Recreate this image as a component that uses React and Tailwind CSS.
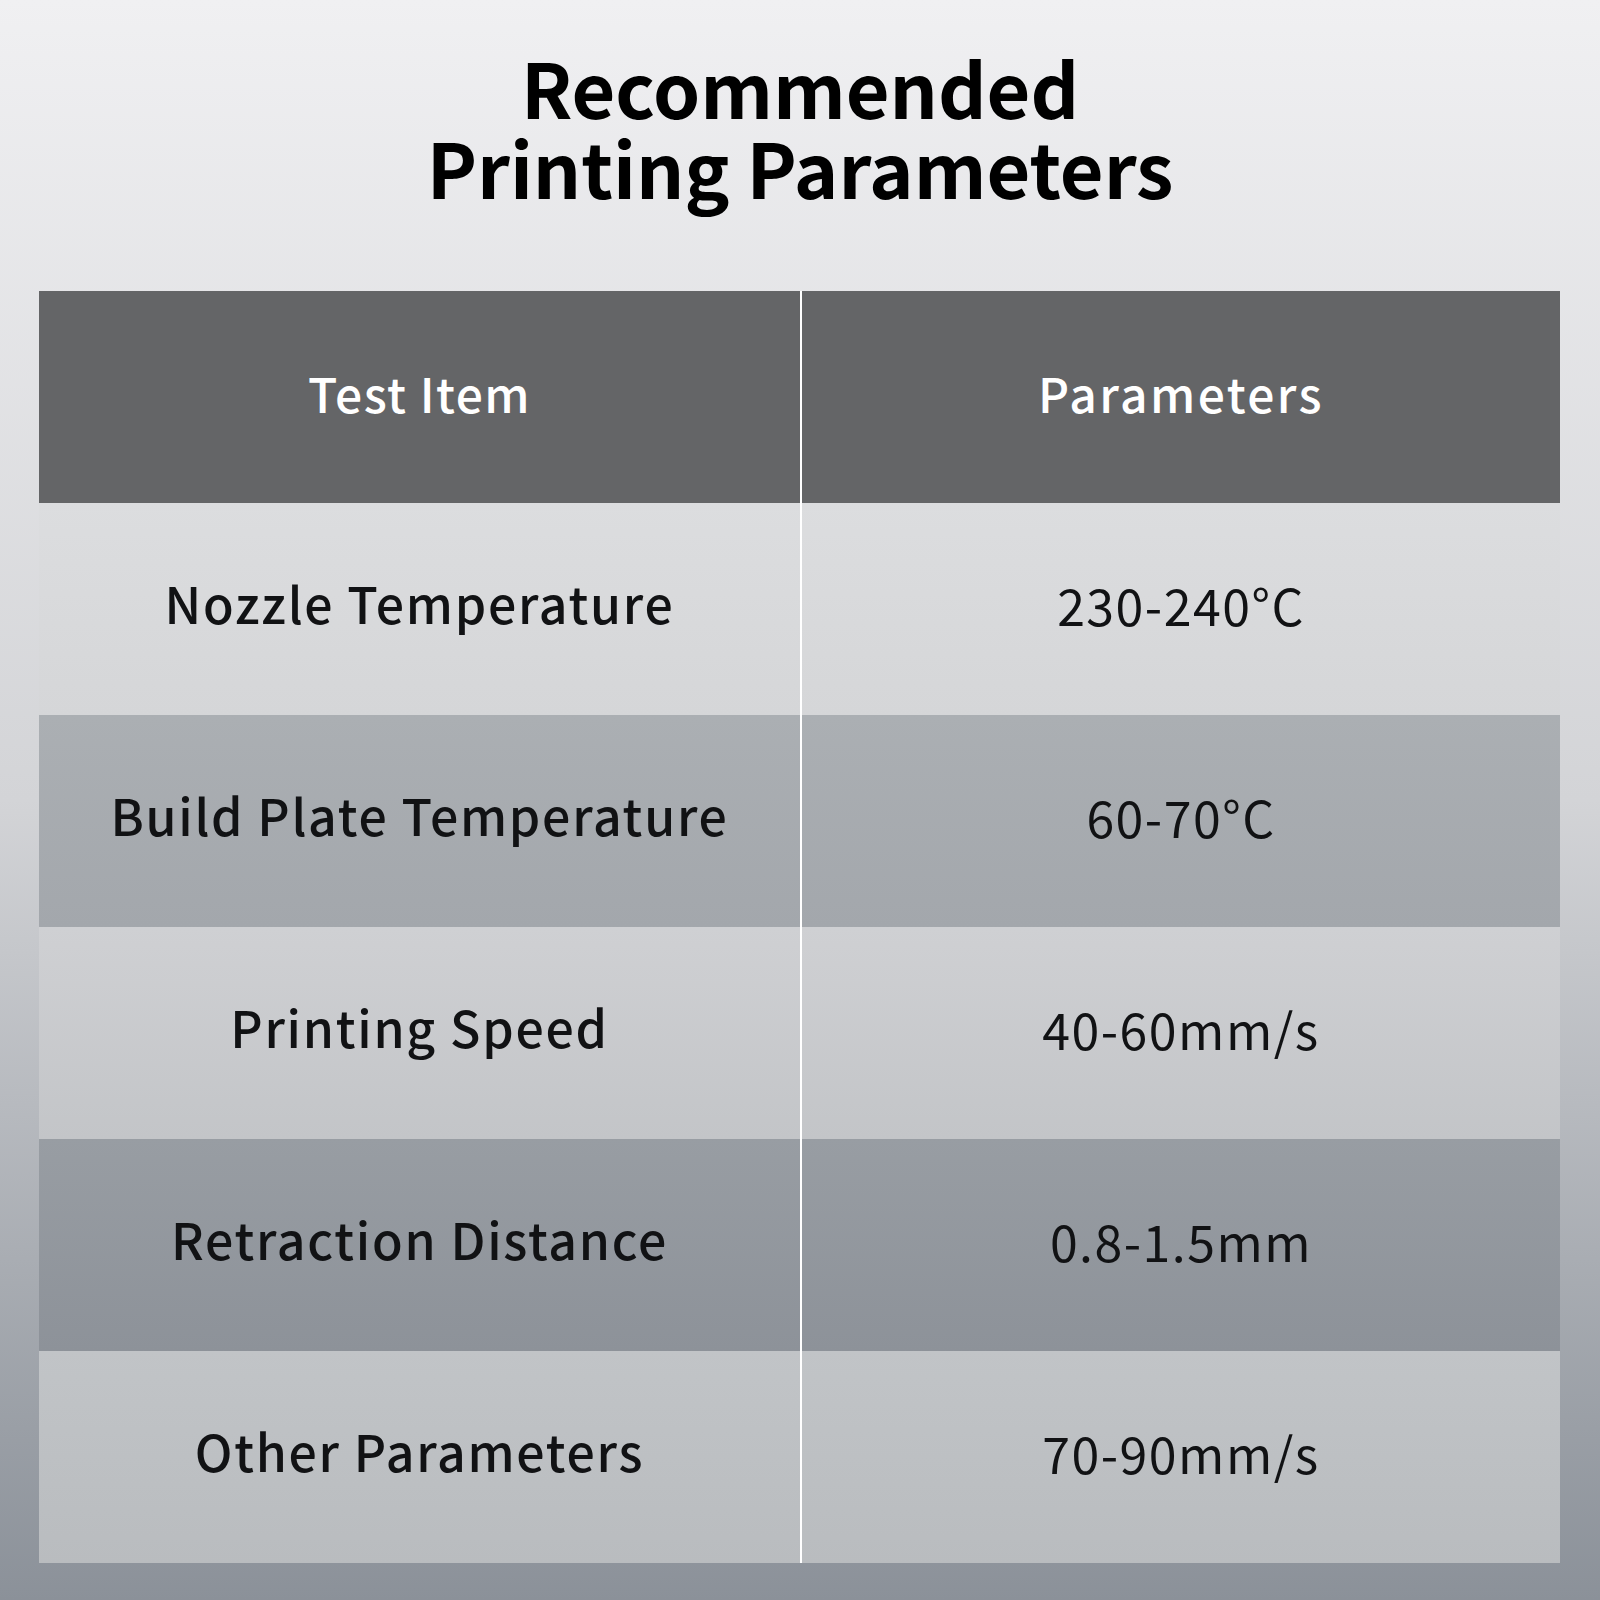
export default function App() {
  const rows = [
    { name: "Nozzle Temperature", value: "230-240°C", bg: "bg-gradient-to-b from-[#dcdddf] to-[#d5d6d8]" },
    { name: "Build Plate Temperature", value: "60-70°C", bg: "bg-gradient-to-b from-[#abafb3] to-[#a3a7ac]" },
    { name: "Printing Speed", value: "40-60mm/s", bg: "bg-gradient-to-b from-[#cfd0d3] to-[#c3c5c8]" },
    { name: "Retraction Distance", value: "0.8-1.5mm", bg: "bg-gradient-to-b from-[#989da3] to-[#8d9299]" },
    { name: "Other Parameters", value: "70-90mm/s", bg: "bg-gradient-to-b from-[#c1c4c7] to-[#b9bcbf]" },
  ];
  return (
    <div
      className="w-[1600px] h-[1600px] bg-gradient-to-b from-[#f0f0f2] via-[#d3d4d7] to-[#8b9199] flex flex-col overflow-hidden"
      style={{ fontFamily: '"Noto Sans CJK SC", "Noto Sans", sans-serif' }}
    >
      <h1 className="pt-[46px] text-center font-bold text-[75.5px] leading-[80px] text-black">
        <div>Recommended</div>
        <div>Printing Parameters</div>
      </h1>
      <div className="mt-[85px] ml-[39px] w-[1521px] flex flex-col">
        <div className="flex h-[212px] bg-[#646567]">
          <div className="w-[761px] flex items-center justify-center pb-[10px] text-white text-[48px] font-medium tracking-[0.03em]">
            Test Item
          </div>
          <div className="flex-1 border-l-2 border-white flex items-center justify-center pb-[10px] text-white text-[48px] font-medium tracking-[0.05em]">
            Parameters
          </div>
        </div>
        {rows.map((r) => (
          <div key={r.name} className={`flex h-[212px] ${r.bg}`}>
            <div className="w-[761px] flex items-center justify-center pb-[14px] text-[#111214] text-[50px] font-medium tracking-[0.035em]">
              {r.name}
            </div>
            <div className="flex-1 border-l-2 border-white flex items-center justify-center pb-[10px] text-[#111214] text-[50px] tracking-[0.03em]">
              {r.value}
            </div>
          </div>
        ))}
      </div>
    </div>
  );
}
